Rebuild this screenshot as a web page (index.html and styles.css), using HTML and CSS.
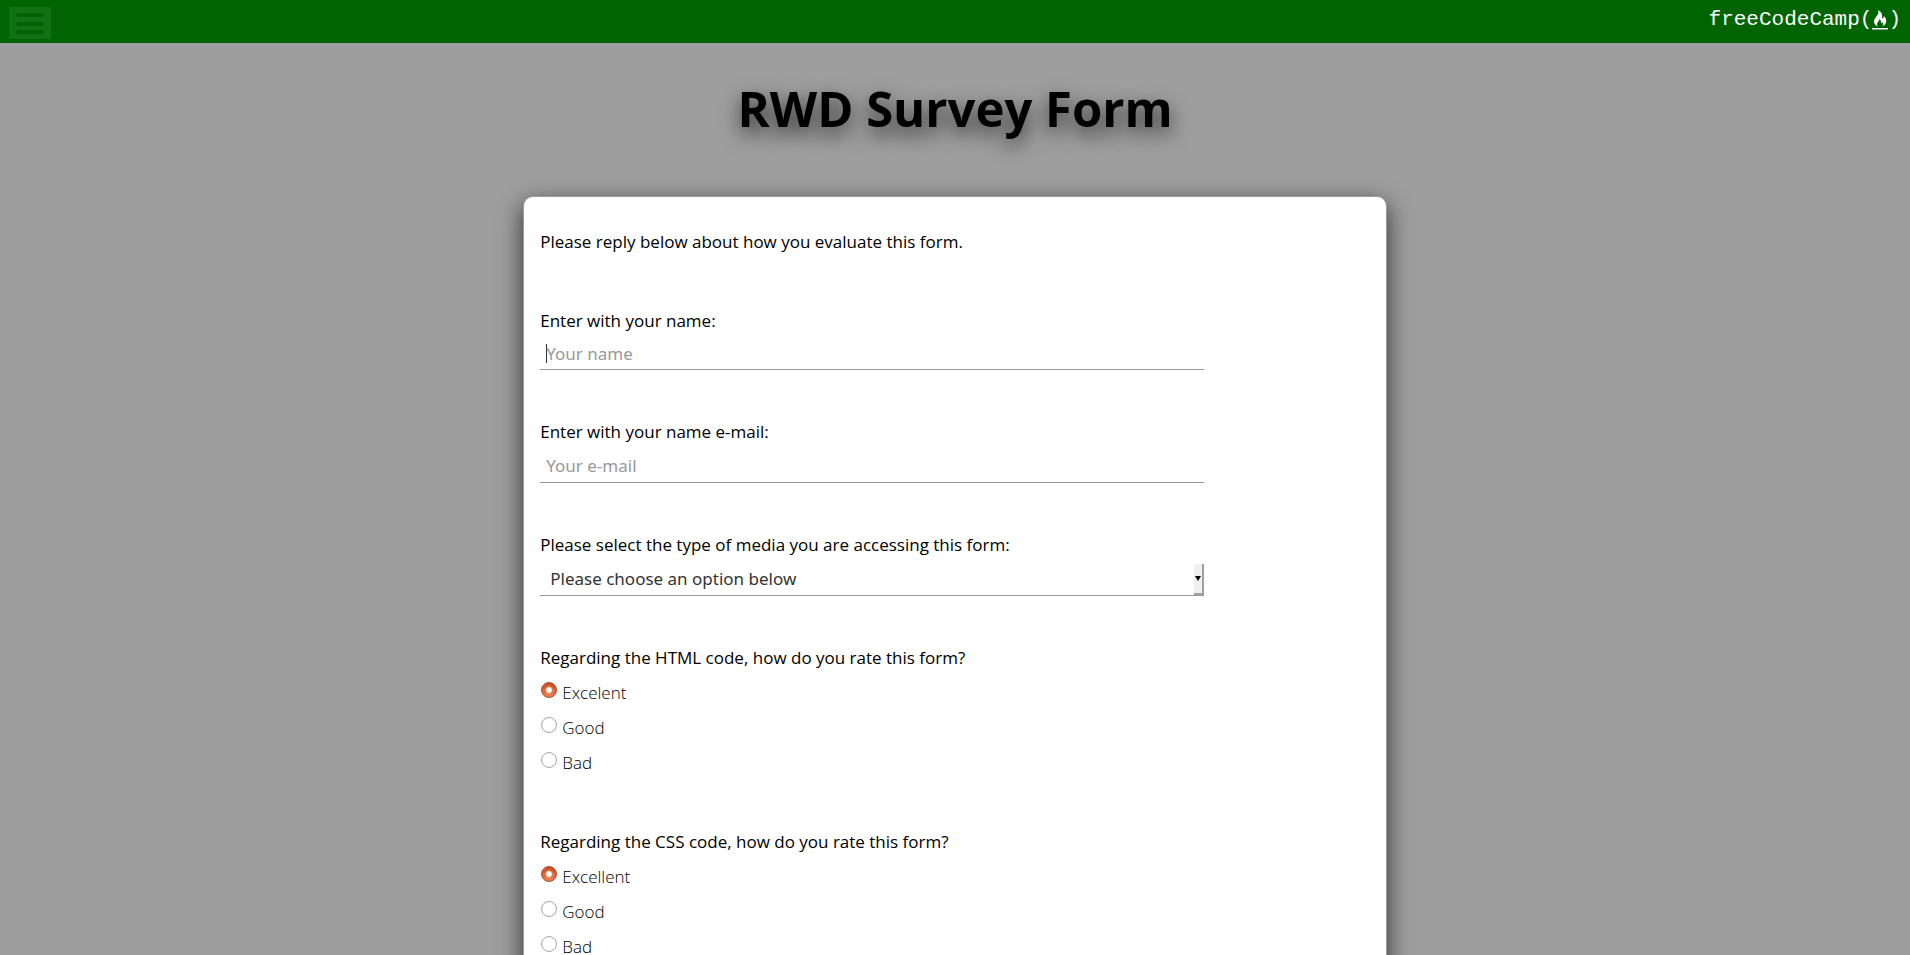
FILE: index.html
```html
<!DOCTYPE html>
<html lang="en">
<head>
<meta charset="utf-8">
<meta name="viewport" content="width=device-width, initial-scale=1">
<title>RWD Survey Form</title>
<link rel="stylesheet" href="styles.css">
</head>
<body>
<header class="topbar">
  <button class="menu" type="button" aria-label="Menu">
    <span class="menu-line"></span><span class="menu-line"></span><span class="menu-line"></span>
  </button>
  <a class="logo" href="#">freeCodeCamp(<svg class="flame" viewBox="0 0 16 20" aria-hidden="true"><path d="M6.2.3C9.4 1.6 10.6 4.500 10 7.200c-.2 1 .9 1.600 1.500.7.300-.5.300-1.300 0-2.200 2 1.700 2.900 3.700 2.700 5.700-.2 2.200-1.700 4-4.100 5 1.200-1.500 1.400-3-.1-4.500-.1.9-.5 1.200-1 1.100C9.200 11 8.600 9.700 7.300 9c.3 2.300-2 2.800-2.200 4.900-.1 1 .3 1.900 1.100 2.600-2.600-.9-4.300-2.800-4.200-5.300C2.200 7.600 7.500 5.600 6.200.3z"/><path d="M0 18h16v1.500H0z"/></svg>)</a>
</header>
<main class="page">
  <h1 class="title">RWD Survey Form</h1>
  <form class="card">
    <p class="row">Please reply below about how you evaluate this form.</p>
    <div class="group">
      <label class="row" for="name">Enter with your name:</label>
      <input class="field field-name" id="name" type="text" placeholder="Your name">
    </div>
    <div class="group">
      <label class="row" for="email">Enter with your name e-mail:</label>
      <input class="field" id="email" type="email" placeholder="Your e-mail">
    </div>
    <div class="group">
      <label class="row" for="media">Please select the type of media you are accessing this form:</label>
      <div class="select-wrap">
        <select class="field select" id="media"><option>Please choose an option below</option></select>
        <span class="arrow" aria-hidden="true"></span>
      </div>
    </div>
    <div class="group" role="radiogroup" aria-labelledby="q-html">
      <p class="row" id="q-html">Regarding the HTML code, how do you rate this form?</p>
      <label class="row option"><input class="radio" type="radio" name="html" checked>Excelent</label>
      <label class="row option"><input class="radio" type="radio" name="html">Good</label>
      <label class="row option"><input class="radio" type="radio" name="html">Bad</label>
    </div>
    <div class="group" role="radiogroup" aria-labelledby="q-css">
      <p class="row" id="q-css">Regarding the CSS code, how do you rate this form?</p>
      <label class="row option"><input class="radio" type="radio" name="css" checked>Excellent</label>
      <label class="row option"><input class="radio" type="radio" name="css">Good</label>
      <label class="row option"><input class="radio" type="radio" name="css">Bad</label>
    </div>
  </form>
</main>
</body>
</html>
```
FILE: styles.css
```css
* { box-sizing: border-box; }
html { scrollbar-width: none; }
body {
  margin: 0;
  background: #9e9e9e;
  color: #000;
  font: 17px/35px "Open Sans", "Noto Sans", sans-serif;
}
.topbar {
  display: flex;
  justify-content: space-between;
  align-items: center;
  height: 43px;
  padding: 0 9px;
  background: #006400;
}
.menu {
  display: flex;
  flex-direction: column;
  justify-content: space-between;
  width: 42px;
  height: 32px;
  margin-top: 3px;
  padding: 6px 7px 5px;
  border: 0;
  background: #147014;
}
.menu-line {
  height: 4px;
  border-radius: 2px;
  background: #006400;
}
.logo {
  display: flex;
  align-items: center;
  height: 38px;
  margin-bottom: 3px;
  color: #fff;
  font: 21px/38px "Liberation Mono", monospace;
  text-decoration: none;
}
.flame {
  width: 16px;
  height: 20px;
  fill: #fff;
}
.title {
  margin: 0;
  padding: 31px 0 54px;
  font-size: 49px;
  line-height: 68px;
  text-align: center;
  text-shadow: 0 8px 20px rgba(0, 0, 0, 0.7);
}
.card {
  display: flex;
  flex-direction: column;
  gap: 44px;
  width: calc(45% + 4px);
  margin: 0 auto;
  padding: 27px 16px 44px;
  border: 1px solid #9b9b9b;
  border-radius: 10px;
  background: #fff;
  box-shadow: 0 8px 24px rgba(0, 0, 0, 0.7);
}
.group { display: flex; flex-direction: column; }
.row { margin: 0; }
.field {
  width: 80%;
  height: 34px;
  padding: 0 6px;
  border: 0;
  border-bottom: 1px solid #999;
  border-radius: 0;
  outline: 0;
  background: #fff;
  color: #333;
  font: 17px "Noto Sans", "Open Sans", sans-serif;
}
.field::placeholder { color: #999; opacity: 1; }
.field-name {
  height: 32px;
  background: linear-gradient(#333, #333) 6px 6px / 1px 19px no-repeat #fff;
}
.select-wrap {
  display: flex;
  position: relative;
  width: 80%;
}
.select {
  width: 100%;
  padding: 0 10px;
  appearance: none;
}
.arrow {
  position: absolute;
  top: 2px;
  right: 0;
  bottom: 1px;
  display: flex;
  align-items: center;
  justify-content: center;
  width: 10px;
  border: solid #a0a0a0;
  border-width: 0 2px 2px 0;
  background: #f1f0ef;
  pointer-events: none;
}
.arrow::before {
  content: "";
  border: 3px solid transparent;
  border-top: 5px solid #000;
  border-bottom: 0;
}
.option {
  display: flex;
  align-items: center;
  gap: 5px;
  color: #000;
  font-weight: 300;
}
.radio {
  width: 16px;
  height: 16px;
  margin: 0 0 6px 1px;
  border: 1px solid #a5a5a5;
  border-radius: 50%;
  background: #fff;
  appearance: none;
}
.radio:checked {
  border-color: #ab4827;
  background: radial-gradient(circle, #fff 2px, transparent 4px), linear-gradient(#cc4a1c, #e88458);
}
```
